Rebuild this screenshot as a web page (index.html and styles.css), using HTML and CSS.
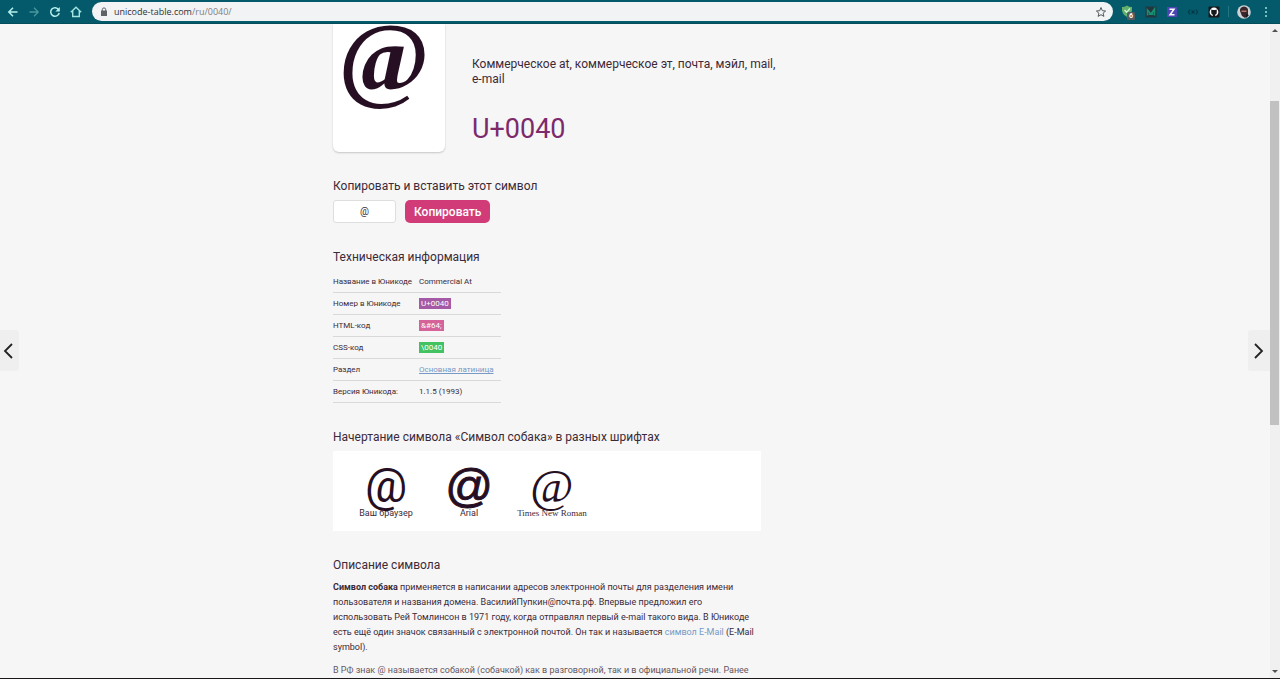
FILE: index.html
```html
<!DOCTYPE html>
<html lang="ru">
<head>
<meta charset="utf-8">
<title>Символ собака</title>
<link rel="stylesheet" href="styles.css">
</head>
<body>
<header class="toolbar">
  <nav class="nav">
    <button class="icon-btn" aria-label="Назад"><svg width="12" height="12" viewBox="0 0 12 12"><path d="M10.500 6H2M6 1.800L1.800 6L6 10.200" fill="none" stroke="#b5f0ec" stroke-width="1.500"/></svg></button>
    <button class="icon-btn" aria-label="Вперёд"><svg width="12" height="12" viewBox="0 0 12 12"><path d="M1.500 6H10M6 1.800L10.200 6L6 10.200" fill="none" stroke="#48979e" stroke-width="1.300"/></svg></button>
    <button class="icon-btn" aria-label="Обновить"><svg width="12" height="12" viewBox="0 0 12 12"><path d="M9.600 3.600A4.300 4.300 0 1 0 10.200 7" fill="none" stroke="#b5f0ec" stroke-width="1.500"/><path d="M10.800 1V5.400H6.400Z" fill="#b5f0ec"/></svg></button>
    <button class="icon-btn" aria-label="Домой"><svg width="12" height="12" viewBox="0 0 12 12"><path d="M.8 6.300L6 1.300L11.200 6.300M2.700 5V10.500H9.300V5" fill="none" stroke="#a2e4e2" stroke-width="1.400"/></svg></button>
  </nav>
  <div class="address">
    <svg width="8" height="10" viewBox="0 0 8 10"><rect x="1" y="3.500" width="6" height="5.500" fill="#5f6368"/><path d="M2.300 4V2.600a1.700 1.700 0 0 1 3.400 0V4" fill="none" stroke="#5f6368"/></svg>
    <span class="url">unicode-table.com<span class="path">/ru/0040/</span></span>
    <button class="icon-btn" aria-label="В закладки"><svg width="12" height="12" viewBox="0 0 12 12"><path d="M6 1.500L7.300 4.700L10.600 5L8.100 7.200L8.900 10.400L6 8.700L3.100 10.400L3.900 7.200L1.400 5L4.700 4.700Z" fill="none" stroke="#55595d"/></svg></button>
  </div>
  <div class="extensions">
    <svg class="ext" width="15" height="16" viewBox="0 0 15 16"><path d="M1 3Q4 3 6 1.500Q8 3 11 3V6.500Q10 11 6 13Q2 11 1 6.500Z" fill="#62b06b"/><path d="M3.500 6L5.700 8.300L9 4.300" fill="none" stroke="#d9f5db" stroke-width="1.300"/><rect x="6" y="8" width="8" height="8" rx="1.500" fill="#575b60"/><text x="10" y="14.300" class="badge">6</text></svg>
    <svg class="ext" width="12" height="12" viewBox="0 0 12 12"><rect x=".5" y=".5" width="11" height="11" fill="#223640"/><path d="M2.500 9.500V4L6 8L9.500 3V9.500M4.500 9V6M7.500 9V6" fill="none" stroke="#18906f" stroke-width="1.500"/></svg>
    <svg class="ext" width="12" height="12" viewBox="0 0 12 12"><rect x="1" y="1" width="10" height="10" fill="#4d45b4"/><path d="M3.500 3.200H8L4 8.800H8.500" fill="none" stroke="#fff" stroke-width="1.500"/></svg>
    <svg class="ext" width="12" height="12" viewBox="0 0 12 12"><path d="M3 3.500L1.500 6L3 8.500M9 3.500L10.500 6L9 8.500M4.500 4.500L7.500 7.500M7.500 4.500L4.500 7.500" fill="none" stroke="#033947" stroke-width="1.200"/></svg>
    <svg class="ext" width="12" height="12" viewBox="0 0 12 12"><rect x=".5" y=".5" width="11" height="11" rx="1" fill="#17191d"/><circle cx="6" cy="6" r="4.400" fill="#fff"/><path d="M4.700 11V8.600Q2.900 8 3.200 5.500L3.300 3.500L4.800 4H7.200L8.700 3.500L8.800 5.500Q9.100 8 7.300 8.600V11Z" fill="#17191d"/></svg>
    <span class="divider"></span>
    <svg class="ext" width="14" height="14" viewBox="0 0 14 14"><circle cx="7" cy="7" r="6.800" fill="#cfd2d6"/><path d="M3 6Q2.500 2 7 1.500Q11.500 2 11 6V11L8 13L5 11Z" fill="#38272a"/><path d="M4.500 5.500H9.500V7H4.500Z" fill="#b2776c"/><path d="M9 9L12 10L9 13Z" fill="#171a20"/></svg>
    <button class="icon-btn" aria-label="Меню"><svg width="12" height="12" viewBox="0 0 12 12"><g fill="#9fe0df"><circle cx="6" cy="2" r="1"/><circle cx="6" cy="6" r="1"/><circle cx="6" cy="10" r="1"/></g></svg></button>
  </div>
</header>
<div class="viewport">
  <a class="pager prev" href="#prev" aria-label="Предыдущий символ"><svg width="12" height="18" viewBox="0 0 12 18"><path d="M10 2L3 9L10 16" fill="none" stroke="#222" stroke-width="1.800"/></svg></a>
  <main class="page">
    <section class="hero">
      <div class="glyph-card">@</div>
      <div class="summary">
        <p class="aliases">Коммерческое at, коммерческое эт, почта, мэйл, mail, e-mail</p>
        <p class="code">U+0040</p>
      </div>
    </section>
    <section class="copy">
      <h2><label for="symbol">Копировать и вставить этот символ</label></h2>
      <div class="copy-row">
        <input id="symbol" class="symbol" type="text" value="@">
        <button class="copy-btn">Копировать</button>
      </div>
    </section>
    <section class="tech">
      <h2>Техническая информация</h2>
      <table class="info">
        <tr><th scope="row">Название в Юникоде</th><td>Commercial At</td></tr>
        <tr><th scope="row">Номер в Юникоде</th><td><span class="tag purple">U+0040</span></td></tr>
        <tr><th scope="row">HTML-код</th><td><span class="tag pink">&amp;#64;</span></td></tr>
        <tr><th scope="row">CSS-код</th><td><span class="tag green">\0040</span></td></tr>
        <tr><th scope="row">Раздел</th><td><a class="block-link" href="#latin">Основная латиница</a></td></tr>
        <tr><th scope="row">Версия Юникода:</th><td>1.1.5 (1993)</td></tr>
      </table>
    </section>
    <section class="fonts">
      <h2>Начертание символа «Символ собака» в разных шрифтах</h2>
      <div class="samples">
        <figure class="sample"><span class="sample-glyph">@</span><figcaption>Ваш браузер</figcaption></figure>
        <figure class="sample arial"><span class="sample-glyph">@</span><figcaption>Arial</figcaption></figure>
        <figure class="sample times"><span class="sample-glyph">@</span><figcaption>Times New Roman</figcaption></figure>
      </div>
    </section>
    <section class="about">
      <h2>Описание символа</h2>
      <p><b>Символ собака</b> применяется в написании адресов электронной почты для разделения имени пользователя и названия домена. ВасилийПупкин@почта.рф. Впервые предложил его использовать Рей Томлинсон в 1971 году, когда отправлял первый e-mail такого вида. В Юникоде есть ещё один значок связанный с электронной почтой. Он так и называется <a href="#email">символ E-Mail</a> (E-Mail symbol).</p>
      <p class="more">В РФ знак @ называется собакой (собачкой) как в разговорной, так и в официальной речи. Ранее</p>
    </section>
  </main>
  <a class="pager next" href="#next" aria-label="Следующий символ"><svg width="12" height="18" viewBox="0 0 12 18"><path d="M2 2L9 9L2 16" fill="none" stroke="#222" stroke-width="1.800"/></svg></a>
  <div class="scrollbar">
    <svg width="6" height="4" viewBox="0 0 6 4"><path d="M0 4L3 1L6 4Z" fill="#505050"/></svg>
    <div class="track"><div class="thumb"></div></div>
    <svg width="6" height="4" viewBox="0 0 6 4"><path d="M0 0L3 3L6 0Z" fill="#505050"/></svg>
  </div>
</div>
</body>
</html>
```
FILE: styles.css
```css
* { box-sizing: border-box; }
body {
  margin: 0;
  height: 100vh;
  display: flex;
  flex-direction: column;
  overflow: hidden;
  background: #f6f6f6;
  border-bottom: 1px solid #1c1719;
  color: #3b2a38;
  font-family: Roboto, "Noto Sans", sans-serif;
  font-size: 9px;
}
h2, p, figure { margin: 0; }
button, input { font: inherit; }
svg { display: block; flex: none; }

.toolbar {
  flex: none;
  display: flex;
  align-items: center;
  height: 24px;
  padding: 0 8px 0 7px;
  background: #045a6a;
  border-bottom: 1px solid #044d5b;
}
.nav { display: flex; gap: 9px; }
.icon-btn { display: block; padding: 0; border: 0; background: none; }
.address {
  flex: 1;
  display: flex;
  align-items: center;
  height: 19px;
  margin-left: 10px;
  padding: 0 6px 0 8px;
  border-radius: 10px;
  background: #f1f3f4;
}
.url { flex: 1; margin-left: 6px; color: #303236; font-family: "Open Sans", "Noto Sans", sans-serif; }
.path { color: #7b7f84; }
.extensions { display: flex; align-items: center; gap: 9px; margin-left: 8px; }
.badge { font: bold 7px Roboto, sans-serif; fill: #fff; text-anchor: middle; }
.divider { width: 1px; height: 11px; margin: 0 -1px; background: #237581; }

.viewport { flex: 1; min-height: 0; display: flex; position: relative; overflow: hidden; }
.page { flex: 1; min-width: 0; max-width: 604px; margin: 0 auto; }
.pager {
  position: absolute;
  top: 306px;
  display: flex;
  align-items: center;
  justify-content: center;
  height: 41px;
  background: #efefef;
}
.prev { left: 0; width: 19px; padding-right: 4px; border-radius: 0 3px 3px 0; }
.next { right: 10px; width: 22px; border-radius: 3px 0 0 3px; }
.scrollbar {
  flex: none;
  display: flex;
  flex-direction: column;
  align-items: center;
  width: 10px;
  padding: 4px 0;
  background: #f0f0f0;
}
.track { flex: 1; width: 10px; padding-top: 69px; }
.thumb { width: 9px; height: 57%; background: #c1c1c1; }

.hero { display: flex; gap: 27px; }
.glyph-card {
  flex: none;
  width: 112px;
  height: 128px;
  padding-right: 10px;
  border-radius: 0 0 6px 6px;
  background: #fff;
  box-shadow: 0 1px 2px #0003;
  color: #260f22;
  font: bold 98px/66px "Liberation Serif", serif;
  text-align: center;
}
.summary { width: 310px; padding-top: 33px; }
.aliases { font-size: 12px; line-height: 15px; }
.code { margin-top: 26px; color: #7c2a6c; font-size: 27px; line-height: 32px; }

h2 { font-size: 12px; font-weight: 400; line-height: 16px; }
.copy { margin-top: 26px; }
.copy-row { display: flex; gap: 9px; margin-top: 6px; }
.symbol {
  width: 63px;
  height: 23px;
  padding: 0;
  border: 1px solid #dedede;
  border-radius: 3px;
  background: #fff;
  color: #3b2a38;
  font-size: 10px;
  text-align: center;
}
.copy-btn {
  height: 23px;
  padding: 0 9px;
  border: 0;
  border-radius: 5px;
  background: #d13c78;
  color: #fff;
  font-size: 12px;
  font-weight: 500;
}

.tech { margin-top: 26px; }
.info { width: 168px; margin-top: 5px; border-collapse: collapse; font-size: 8px; line-height: 11px; }
.info th, .info td { height: 22px; padding: 1px 0 0; border-bottom: 1px solid #d9d9d9; text-align: left; vertical-align: middle; font-weight: 400; }
.info th { width: 86px; white-space: nowrap; }
.info td { white-space: nowrap; }
.tag { display: inline-block; padding: 0 2px; color: #fff; }
.purple { background: #a45aa5; }
.pink { background: #d5639a; }
.green { background: #43c262; }
a { color: #7699c5; text-decoration: none; }
.block-link { text-decoration: underline; }

.fonts { margin-top: 26px; }
.samples {
  display: flex;
  gap: 27px;
  width: 428px;
  height: 80px;
  margin-top: 6px;
  padding: 14px 25px;
  background: #fff;
}
.sample { width: 56px; display: flex; flex-direction: column; align-items: center; line-height: 12px; white-space: nowrap; }
.sample-glyph { height: 42px; color: #260f22; font-size: 47px; line-height: 42px; }
.arial { font-family: "Liberation Sans", Arial, sans-serif; }
.arial .sample-glyph { -webkit-text-stroke: 1px #260f22; }
.arial figcaption { font-family: Roboto, sans-serif; }
.times { font-family: "Liberation Serif", "Times New Roman", serif; }

.about { width: 425px; margin-top: 26px; line-height: 15px; }
.about p { margin-top: 7px; }
.about .more { margin-top: 8px; color: #665761; white-space: nowrap; }
```
